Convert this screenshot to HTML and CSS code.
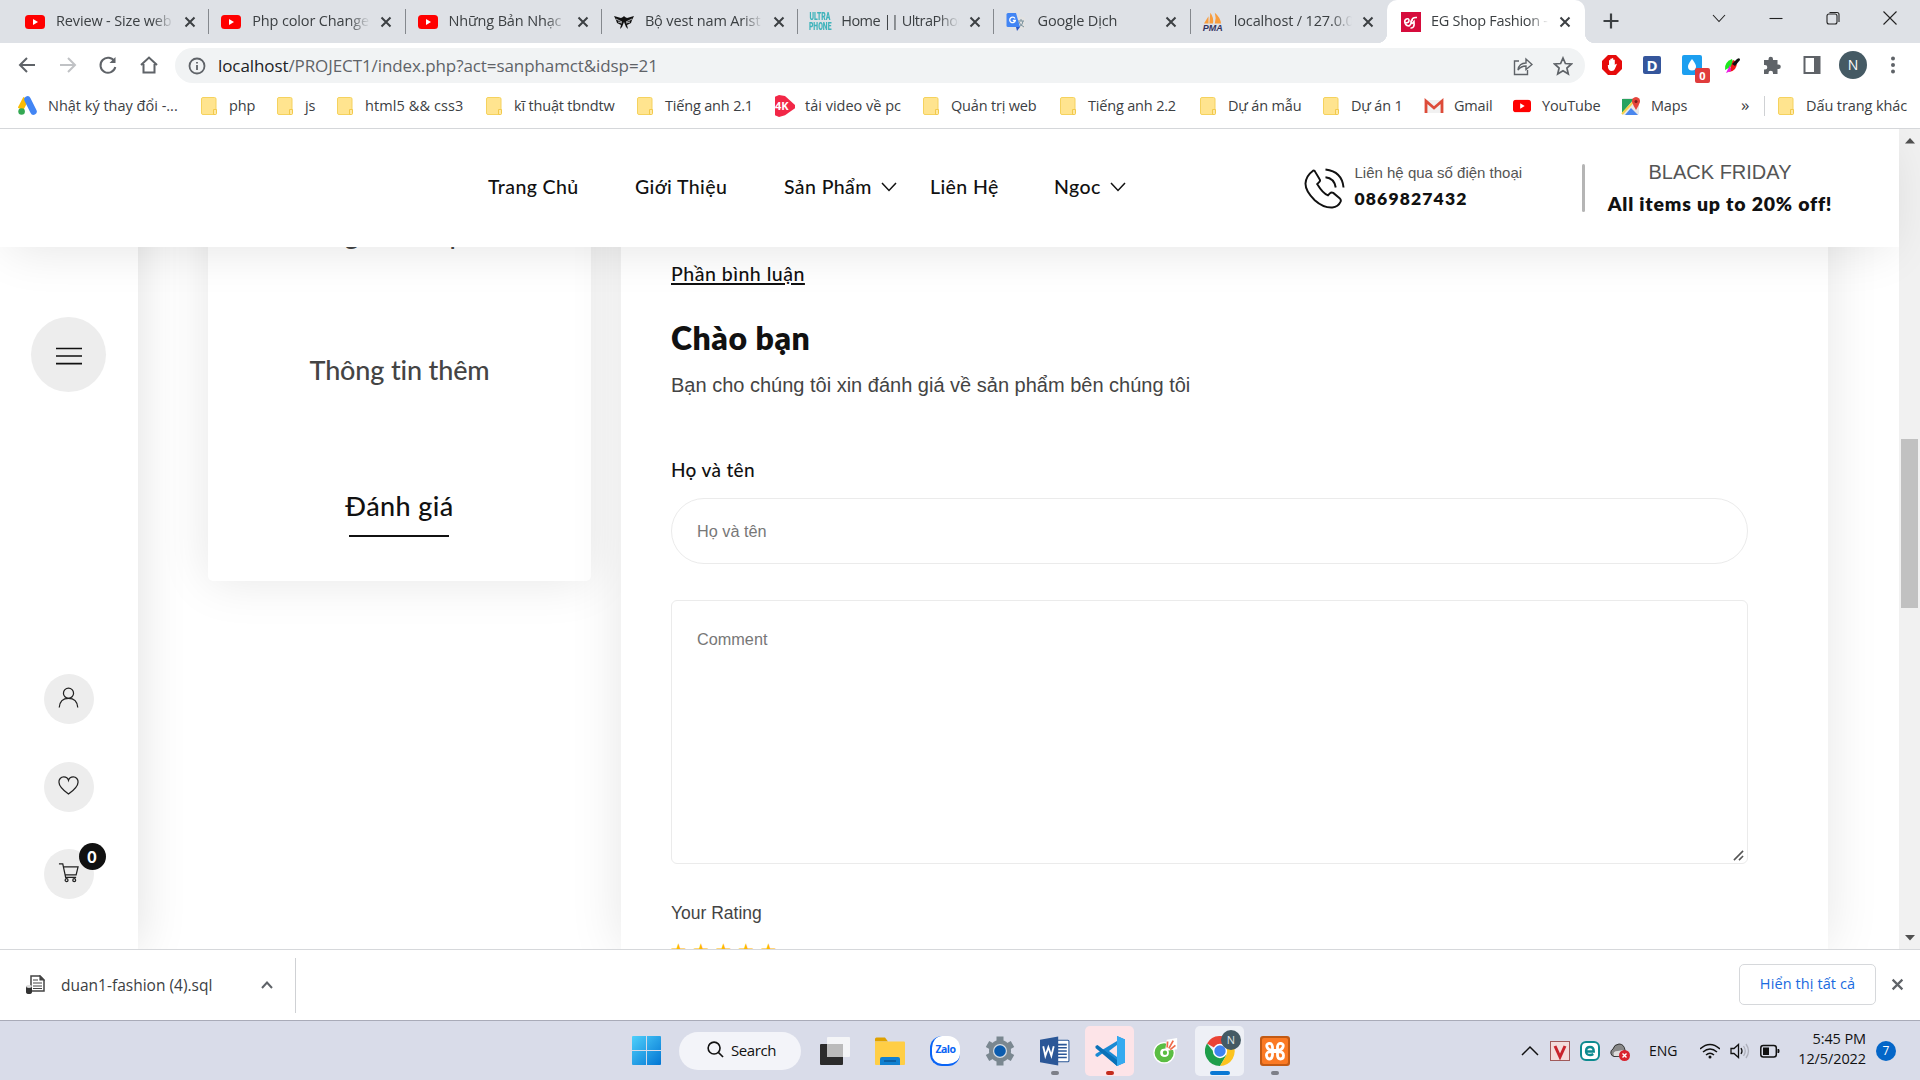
FILE: index.html
```html
<!DOCTYPE html>
<html lang="vi">
<head>
<meta charset="utf-8">
<title>EG Shop Fashion</title>
<link rel="stylesheet" href="styles.css">
</head>
<body>
<svg class="defs" width="0" height="0">
  <symbol id="x" viewBox="0 0 12 12"><path d="M1.5 1.5l9 9M10.5 1.5l-9 9" stroke="currentColor" stroke-width="2" fill="none"/></symbol>
  <symbol id="yt" viewBox="0 0 20 14"><rect width="20" height="14" rx="3.5" fill="#f00"/><path d="M8 4v6l5-3z" fill="#fff"/></symbol>
  <symbol id="folder" viewBox="0 0 16 18"><rect x=".5" y=".5" width="14.5" height="17" rx="1.5" fill="#ffe48f" stroke="#f5d25e"/><path d="M12.5 17.5v-5h3v4q0 1-1 1z" fill="#ffe9a3" stroke="#f2c94c"/></symbol>
  <symbol id="down" viewBox="0 0 16 10"><path d="M1 1l7 7.5L15 1" stroke="currentColor" stroke-width="1.5" fill="none"/></symbol>
</svg>

<div class="tabs">
  <div class="tab"><svg class="fav" viewBox="0 0 20 20"><use href="#yt" y="3" width="20" height="14"/></svg><span class="tt">Review - Size web</span><svg class="tx"><use href="#x"/></svg></div>
  <div class="tab"><svg class="fav" viewBox="0 0 20 20"><use href="#yt" y="3" width="20" height="14"/></svg><span class="tt">Php color Change</span><svg class="tx"><use href="#x"/></svg></div>
  <div class="tab"><svg class="fav" viewBox="0 0 20 20"><use href="#yt" y="3" width="20" height="14"/></svg><span class="tt">Những Bản Nhạc</span><svg class="tx"><use href="#x"/></svg></div>
  <div class="tab"><svg class="fav" viewBox="0 0 20 20"><path d="M0 4l7 2 2-1 1-1 1 1 2 1 7-2-2 4-1 3-4 2 1 4-2-2-2-5-2 5-2 2 1-4-4-2-1-3z" fill="#111"/><path d="M2 7l6 3M18 7l-6 3M4 10l4 1M16 10l-4 1" stroke="#dee1e6" stroke-width=".8"/></svg><span class="tt">Bộ vest nam Arist</span><svg class="tx"><use href="#x"/></svg></div>
  <div class="tab"><span class="fav ultra"><b>ULTRA</b><b>PHONE</b></span><span class="tt tight">Home || UltraPhon</span><svg class="tx"><use href="#x"/></svg></div>
  <div class="tab"><svg class="fav" viewBox="0 0 20 20"><rect x="8" y="5" width="11" height="12" rx="1" fill="#e2e2e2"/><path d="M12 9h6M15 7v2M13 15q4-2 4-6M13 10q1 3 5 5" stroke="#78909c" fill="none"/><path d="M2 1h8l4 14H2q-1.500 0-1.500-1.500v-11Q.5 1 2 1z" fill="#4285f4"/><path d="M10 15h4l-3 4z" fill="#2a56c6"/><path d="M9 6.500A2.800 2.800 0 1 0 9.300 8.500H6.800" stroke="#fff" stroke-width="1.300" fill="none"/></svg><span class="tt">Google Dịch</span><svg class="tx"><use href="#x"/></svg></div>
  <div class="tab"><span class="fav pma"><svg viewBox="0 0 20 13"><path d="M5 4v8H0zM7 0q4 5 3 12H6zM12 0q6 5 7 12h-7q2-6 0-12z" fill="#f89c3c"/></svg><b>PMA</b></span><span class="tt">localhost / 127.0.0</span><svg class="tx"><use href="#x"/></svg></div>
  <div class="tab active"><svg class="fav" viewBox="0 0 20 20"><rect width="20" height="20" fill="#d60c3c"/><path d="M4 11q4 0 4-2.500T5.500 7 4 11t4 3q2-1 2.500-5T16 5.500M12 8q-2.500 0-2 2.500t3-1q1 7-3.500 6.500" stroke="#fff" stroke-width="1.600" fill="none"/></svg><span class="tt">EG Shop Fashion -</span><svg class="tx"><use href="#x"/></svg></div>
  <svg class="plus" viewBox="0 0 16 16"><path d="M8 .5v15M.5 8h15" stroke="#3c4043" stroke-width="2.200"/></svg>
  <div class="wins">
    <svg viewBox="0 0 14 14"><path d="M1 4l6 6.500L13 4"/></svg>
    <svg viewBox="0 0 14 14"><path d="M.5 7.500h13"/></svg>
    <svg viewBox="0 0 14 14"><rect x="1" y="3" width="10" height="10" rx="2"/><path d="M3.500 1.500H11q2 0 2 2V11"/></svg>
    <svg viewBox="0 0 14 14"><path d="M.5 .5l13 13M13.500 .5l-13 13"/></svg>
  </div>
</div>

<div class="toolbar">
  <svg class="nav" viewBox="0 0 20 20"><path d="M18 10H3M10 3l-7 7 7 7"/></svg>
  <svg class="nav dim" viewBox="0 0 20 20"><path d="M2 10h15M10 3l7 7-7 7"/></svg>
  <svg class="nav" viewBox="0 0 20 20"><path d="M16.500 6.500A7.500 7.500 0 1 0 17.300 12"/><path d="M17.500 2v6h-6z" fill="#5f6368" stroke="none"/></svg>
  <svg class="nav" viewBox="0 0 20 20"><path d="M2 10l8-7.500L18 10M4.500 9v8.500h11V9"/></svg>
  <div class="omni">
    <svg class="info" viewBox="0 0 18 18"><circle cx="9" cy="9" r="7.500"/><path d="M9 8v5M9 5v1.600"/></svg>
    <span class="url"><b>localhost</b>/PROJECT1/index.php?act=sanphamct&amp;idsp=21</span>
    <svg class="oi" viewBox="0 0 20 20"><path d="M6 5H1.500v13.500h13V14M5 14q1-7 8-7V3l6 5.500-6 5V10q-5 0-8 4z" stroke-width="1.400"/></svg>
    <svg class="oi" viewBox="0 0 20 20"><path d="M10 2l2.400 5.500 6 .5-4.500 4 1.400 6L10 14.800 4.700 18l1.400-6-4.500-4 6-.5z" stroke-width="1.700"/></svg>
  </div>
  <div class="exts">
    <svg viewBox="0 0 20 20"><path d="M6 0h8l6 6v8l-6 6H6l-6-6V6z" fill="#e60b0b"/><path d="M6 10l1 0V5.500q.8-1 1.300 0V4q.9-1 1.500 0v-.5q.8-1 1.500 0V5q.8-1 1.500 0v5l1-1q1-.5 1 .3-1 2.700-2 4.700-.6 2-3 2-4 0-4-6z" fill="#fff"/></svg>
    <span class="ext-d">D</span>
    <span class="ext-w"><svg viewBox="0 0 20 20"><rect width="20" height="20" rx="2" fill="#1c9ff0"/><path d="M10 4q4 5 4 7.500a4 4 0 0 1-8 0Q6 9 10 4z" fill="#fff"/></svg><i>0</i></span>
    <svg viewBox="0 0 20 20"><path d="M3 15Q2 7 10 4l2 6z" fill="#1ee81e"/><path d="M7 17Q15 16 15 7l-4-2z" fill="#f01616"/><path d="M4 18l4-8 1 6z" fill="#ea1be5"/><path d="M10 9l5-5q3-2 3 1l-5 6z" fill="#111"/></svg>
    <svg viewBox="0 0 20 20"><path d="M2 5h4.500V4a2.200 2.200 0 0 1 4.500 0v1h4.500v4.500h1a2.300 2.300 0 0 1 0 4.600h-1V19H11v-1a2.200 2.200 0 0 0-4.500 0v1H2v-4.500h1a2.300 2.300 0 0 0 0-4.600H2z" fill="#5f6368"/></svg>
    <svg viewBox="0 0 20 20"><path d="M2.500 2h15v16h-15z" fill="none" stroke="#5f6368" stroke-width="2"/><path d="M12 2h6v16h-6z" fill="#5f6368"/></svg>
    <span class="ava">N</span>
    <svg viewBox="0 0 20 20" fill="#5f6368"><circle cx="9" cy="3.500" r="2"/><circle cx="9" cy="10" r="2"/><circle cx="9" cy="16.500" r="2"/></svg>
  </div>
</div>

<div class="marks">
  <div class="bm b1"><svg viewBox="0 0 20 20"><path d="M8 2.500L2.500 13" stroke="#fbbc04" stroke-width="6"/><path d="M9.500 3.500l6 12" stroke="#4285f4" stroke-width="6.500" stroke-linecap="round"/><circle cx="3.600" cy="15.500" r="3.300" fill="#34a853"/></svg><span>Nhật ký thay đổi -...</span></div>
  <div class="bm b2"><svg class="fo"><use href="#folder"/></svg><span>php</span></div>
  <div class="bm b3"><svg class="fo"><use href="#folder"/></svg><span>js</span></div>
  <div class="bm b4"><svg class="fo"><use href="#folder"/></svg><span>html5 &amp;&amp; css3</span></div>
  <div class="bm b5"><svg class="fo"><use href="#folder"/></svg><span>kĩ thuật tbndtw</span></div>
  <div class="bm b6"><svg class="fo"><use href="#folder"/></svg><span>Tiếng anh 2.1</span></div>
  <div class="bm b7"><span class="fourk">4K</span><span>tải video về pc</span></div>
  <div class="bm b8"><svg class="fo"><use href="#folder"/></svg><span>Quản trị web</span></div>
  <div class="bm b9"><svg class="fo"><use href="#folder"/></svg><span>Tiếng anh 2.2</span></div>
  <div class="bm b10"><svg class="fo"><use href="#folder"/></svg><span>Dự án mẫu</span></div>
  <div class="bm b11"><svg class="fo"><use href="#folder"/></svg><span>Dự án 1</span></div>
  <div class="bm b12"><svg viewBox="0 0 20 20"><path d="M1 4h18v13H1z" fill="#f1f1f1"/><path d="M2 17V5l8 7 8-7v12" stroke="#dd4b39" stroke-width="2.800" fill="none"/></svg><span>Gmail</span></div>
  <div class="bm b13"><svg viewBox="0 0 20 20"><use href="#yt" x="1" y="3.500" width="18" height="13"/></svg><span>YouTube</span></div>
  <div class="bm b14"><svg viewBox="0 0 20 20"><rect x="1" y="2" width="17" height="17" rx="2" fill="#e8e8e8"/><path d="M1 3h12L1 17z" fill="#27a35f"/><path d="M4 19l6-7 7 7z" fill="#4a87ee"/><path d="M1 18L14 4" stroke="#f7d147" stroke-width="2"/><path d="M15 1a4.300 4.300 0 0 1 4 5q-1 3-4 8-3-5-4-8a4.300 4.300 0 0 1 4-5z" fill="#e5443a"/><circle cx="15" cy="5.500" r="1.500" fill="#7d1d17"/></svg><span>Maps</span></div>
  <span class="more">»</span>
  <div class="bm b15"><svg class="fo"><use href="#folder"/></svg><span>Dấu trang khác</span></div>
</div>

<div class="page">
  <div class="side">
    <div class="circ big"><svg viewBox="0 0 26 18"><path d="M0 1.500h26M0 9h26M0 16.700h26" stroke="#111" stroke-width="1.700"/></svg></div>
    <div class="circ c2"><svg viewBox="0 0 22 22"><circle cx="11" cy="6.500" r="5.300"/><path d="M1.300 21.500Q2 12 11 12t9.700 9.500"/></svg></div>
    <div class="circ c3"><svg viewBox="0 0 22 22"><path d="M11 20Q1 12.500 1 7.500A5 5 0 0 1 6 2q4 0 5 3.500Q12 2 16 2a5 5 0 0 1 5 5.500Q21 12.500 11 20z"/></svg></div>
    <div class="circ c4"><svg viewBox="0 0 22 22"><path d="M1 2h4l3 14h11M5.500 5H21l-2 8.500H7.500"/><circle cx="9" cy="19" r="1.500"/><circle cx="17" cy="19" r="1.500"/></svg><i class="cnt">0</i></div>
  </div>
  <div class="left">
    <div class="lt">Thông tin sản phẩm</div>
    <div class="lt">Thông tin thêm</div>
    <div class="lt on">Đánh giá</div>
  </div>
  <div class="right">
    <div class="rev">Phần bình luận</div>
    <h2>Chào bạn</h2>
    <p class="ask">Bạn cho chúng tôi xin đánh giá về sản phẩm bên chúng tôi</p>
    <label>Họ và tên</label>
    <div class="inp">Họ và tên</div>
    <div class="area"><span>Comment</span><svg viewBox="0 0 12 12"><path d="M1 11L11 1M6.500 11L11 6.500" stroke="#555" stroke-width="1.700"/></svg></div>
    <div class="yr">Your Rating</div>
    <div class="stars"><span>★</span><span>★</span><span>★</span><span>★</span><span>★</span></div>
  </div>
  <div class="sb">
    <svg viewBox="0 0 10 6"><path d="M0 5.500L5 0l5 5.500z" fill="#505050"/></svg>
    <div class="thumb"></div>
    <svg class="dn" viewBox="0 0 10 6"><path d="M0 0h10L5 5.500z" fill="#505050"/></svg>
  </div>
  <header>
    <span class="n n1">Trang Chủ</span>
    <span class="n n2">Giới Thiệu</span>
    <span class="n n3">Sản Phẩm<svg><use href="#down"/></svg></span>
    <span class="n n4">Liên Hệ</span>
    <span class="n n5">Ngoc<svg><use href="#down"/></svg></span>
    <svg class="phone" viewBox="0 0 42 42"><path d="M9 3Q2 8 1.500 16q0 8 9.500 17 9 8 18 7.500 6-.5 8.500-6 .8-2-1-3.500L30 25.500q-2-1-3.500.5l-2 2q-5-1.500-11-11.500l2-2q1.500-1.500.5-3L11.500 4Q10.500 2 9 3z"/><path d="M22 1.500q17 2 18.500 18.500M22 9.500q9 1 10.500 10.500"/></svg>
    <div class="call"><span>Liên hệ qua số điện thoại</span><b>0869827432</b></div>
    <i class="vr"></i>
    <div class="bf"><span>BLACK FRIDAY</span><b>All items up to 20% off!</b></div>
  </header>
</div>

<div class="dl">
  <svg class="file" viewBox="0 0 20 20"><path d="M6 1h9l4 4v11H6z" fill="#fff" stroke="#444" stroke-width="1.500"/><path d="M15 1v4h4zM8 5h5M8 8h9M8 11h9M8 13.500h9" stroke="#444" stroke-width="1.200" fill="#444"/><path d="M1 11h6v6q0 2-3 2t-3-2z" fill="#333"/><ellipse cx="4" cy="11.500" rx="3" ry="1.400" fill="#ddd"/></svg>
  <span class="fn">duan1-fashion (4).sql</span>
  <svg class="up" viewBox="0 0 12 8"><path d="M1 7l5-5.500L11 7" stroke="#5f6368" stroke-width="2" fill="none"/></svg>
  <i class="sep"></i>
  <span class="all">Hiển thị tất cả</span>
  <svg class="cl"><use href="#x"/></svg>
</div>

<div class="task">
  <svg class="win" viewBox="0 0 30 30"><defs><linearGradient id="wg" x2="1" y2="1"><stop stop-color="#4fd0fb"/><stop offset="1" stop-color="#0275d3"/></linearGradient></defs><path d="M0 1q0-1 1-1h13.500v14.500H0zM15.500 0H29q1 0 1 1v13.500H15.500zM0 15.500h14.500V30H1q-1 0-1-1zM15.500 15.500H30V29q0 1-1 1H15.500z" fill="url(#wg)"/></svg>
  <div class="search"><svg viewBox="0 0 18 18"><circle cx="7.500" cy="7.500" r="6.300"/><path d="M12 12l5 5"/></svg>Search</div>
  <div class="apps">
    <div class="app"><svg viewBox="0 0 30 30"><rect y="8" width="23" height="21" rx="1" fill="#2b2b2b"/><rect x="7" y="1" width="23" height="20" rx="1" fill="#f4f5f7"/><path d="M7 8h16v13H7z" fill="#bbb"/></svg></div>
    <div class="app"><svg viewBox="0 0 30 30"><path d="M0 3q0-1.500 1.500-1.500H10l3 4H0z" fill="#dfa100"/><path d="M0 5.500h29q1 0 1 1V28q0 1-1 1H1q-1 0-1-1z" fill="#ffce45"/><path d="M5 29v-6q0-2 2-2h16q2 0 2 2v6z" fill="#1080d0"/><path d="M9 25h12" stroke="#0a5694" stroke-width="1.500"/></svg></div>
    <div class="app"><span class="zalo">Zalo</span></div>
    <div class="app"><svg viewBox="0 0 30 30"><circle cx="15" cy="15" r="11" fill="#7a8790"/><path d="M15 .5v29M2.500 8l25 14M27.500 8L2.500 22" stroke="#7a8790" stroke-width="7"/><circle cx="15" cy="15" r="7" fill="#d7dde4"/><circle cx="15" cy="15" r="5.800" fill="#0c5cae"/></svg></div>
    <div class="app gray"><svg viewBox="0 0 28 28"><path d="M14 4h12q1 0 1 1v18q0 1-1 1H14z" fill="#fff" stroke="#2b5797"/><path d="M16 8h9M16 11h9M16 14h9M16 17h9M16 20h9" stroke="#2b5797" stroke-width="1.500"/><path d="M0 3.500L17 .5v27l-17-3z" fill="#2b5797"/><path d="M3 9.500l2 9 2.800-8 2.800 8 2.200-9" stroke="#fff" stroke-width="1.700" fill="none"/></svg></div>
    <div class="app vs"><svg viewBox="0 0 30 30"><path d="M22 0l8 3.500v23L22 30 8 17l-5.500 4L.5 20v-2L22 5z" fill="#1a8ad4"/><path d="M.5 10l2-1L22 24v6L.5 12z" fill="#0a71b8"/><path d="M22 0l8 3.500v23L22 30z" fill="#35aaf0"/><path d="M22 9l-8 6 8 6z" fill="#fde4e8"/></svg></div>
    <div class="app"><svg viewBox="0 0 30 30"><circle cx="14" cy="17" r="12.500" fill="#fff"/><circle cx="14" cy="17" r="7.800" fill="none" stroke="#5abd43" stroke-width="6.500"/><path d="M15 15L17 2l12-2v13z" fill="#fff"/><path d="M17.500 11l.5-7M19.500 12l5-9M21 13.500l6-5" stroke="#ef6a4a" stroke-width="2"/><circle cx="15" cy="17" r="3.500" fill="#5abd43" stroke="#fff" stroke-width="2"/></svg></div>
    <div class="app chr"><svg viewBox="0 0 30 30"><path d="M15 15L2 7.500A15 15 0 0 1 28 7.500z" fill="#ea4335"/><path d="M15 15h-7L2 7.500A15 15 0 0 0 15 30l6.500-11z" fill="#1e9e4a"/><path d="M15 8h13a15 15 0 0 1-13 22l6.500-11z" fill="#fcc31e"/><circle cx="15" cy="15" r="7.200" fill="#fff"/><circle cx="15" cy="15" r="5.700" fill="#3f83f0"/></svg><i class="nb">N</i></div>
    <div class="app gray"><svg viewBox="0 0 30 30"><rect width="30" height="30" rx="3" fill="#c25a14"/><rect x="2" y="2" width="26" height="26" rx="2" fill="#fb7a24"/><path d="M9 7.500Q6 8 7 11t5 3.500h6q4-.5 5-3.500t-2-3.500-3.500 3V19q0 4 3 4t3-3.500-4.500-4h-8q-5 .5-4.500 4t3 3.500 3-4v-8q-.5-4-3.500-3.500z" stroke="#fff" stroke-width="2.800" fill="none"/></svg></div>
  </div>
  <div class="tray">
    <svg viewBox="0 0 20 20"><path d="M2 14l8-8 8 8" stroke="#111" stroke-width="1.500" fill="none"/></svg>
    <svg viewBox="0 0 20 20"><rect x=".5" y=".5" width="19" height="19" fill="#f3dcdc" stroke="#a05a5a"/><path d="M5 5l5 11 5-11" stroke="#c8232c" stroke-width="3" fill="none"/></svg>
    <svg viewBox="0 0 20 20"><rect x="1" y="1" width="18" height="18" rx="5" fill="#fff" stroke="#0d8a8f" stroke-width="2"/><path d="M6.500 10.500h7.300q0-4.500-3.800-4.500t-4 4 4 4q2 0 3.300-1" stroke="#0d8a8f" stroke-width="2.300" fill="none"/></svg>
    <svg viewBox="0 0 20 20"><path d="M4 15.500a4 4 0 0 1-1-7.500Q4 3.500 9 3q5 0 6 6v6z" fill="#888" stroke="#333"/><path d="M4 15q-2-5 4-5l5-1v6z" fill="#ddd"/><circle cx="14.500" cy="14.500" r="5.500" fill="#d9232e"/><path d="M12.500 12.500l4 4M16.500 12.500l-4 4" stroke="#fff" stroke-width="1.400"/></svg>
    <span class="eng">ENG</span>
    <svg viewBox="0 0 20 20" fill="none" stroke="#111" stroke-width="1.500"><path d="M0 8q10-9 20 0M3 11q7-6 14 0M6 14q4-3.500 8 0"/><circle cx="10" cy="16" r="1.500" fill="#111" stroke="none"/></svg>
    <svg viewBox="0 0 20 20" fill="none" stroke="#111" stroke-width="1.300"><path d="M1 7.500h3L8.500 3.500v13L4 12.500H1zM11 7q2 3 0 6"/><path d="M13.500 5q3.500 5 0 10M16 3q5 7 0 14" stroke="#aeb0bb"/></svg>
    <svg viewBox="0 0 20 20"><rect x=".8" y="4.500" width="15.500" height="11.500" rx="2.500" fill="none" stroke="#111" stroke-width="1.500"/><rect x="3" y="6.500" width="6" height="7.500" fill="#111"/><path d="M17.500 8h1.500q1 2 0 4h-1.500z" fill="#111"/></svg>
    <div class="clock"><span>5:45 PM</span><span>12/5/2022</span></div>
    <i class="seven">7</i>
  </div>
</div>
</body>
</html>
```
FILE: styles.css
```css
* { box-sizing: border-box; }
body { margin: 0; width: 1920px; height: 1080px; overflow: hidden; display: flex; flex-direction: column; background: #fff; font-family: "Open Sans", "Noto Sans", sans-serif; font-size: 14.5px; color: #3c4043; white-space: nowrap; }
svg { display: block; flex: none; }
i { font-style: normal; }
.defs { position: absolute; }

.tabs { height: 43px; background: #dee1e6; display: flex; padding-left: 13px; flex: none; }
.tab { width: 196.300px; height: 43px; display: flex; align-items: center; padding-left: 12px; position: relative; flex: none; }
.tab::after { content: ""; position: absolute; right: 0; top: 9px; width: 1px; height: 25px; background: #84888d; }
.tab:nth-child(7)::after, .tab.active::after { display: none; }
.fav { width: 20px; height: 20px; margin-right: 11px; flex: none; }
.tt { width: 118px; overflow: hidden; margin-right: 10px; padding-bottom: 2px; letter-spacing: -.15px; -webkit-mask-image: linear-gradient(90deg, #000 82%, transparent); mask-image: linear-gradient(90deg, #000 82%, transparent); }
.tight { letter-spacing: -.5px; }
.tx { width: 12px; height: 12px; }
.active { background: #fff; border-radius: 10px 10px 0 0; width: 198px; padding-left: 14px; }
.active .fav { margin-right: 10px; }
.active .tt { letter-spacing: -.3px; }
.active::before { content: ""; position: absolute; left: -10px; right: -10px; bottom: 0; height: 10px; background: radial-gradient(circle at 0 0, transparent 10px, #fff 10.500px) 0 0 / 10px 10px no-repeat, radial-gradient(circle at 10px 0, transparent 10px, #fff 10.500px) 100% 0 / 10px 10px no-repeat; }
.ultra, .pma { display: flex; flex-direction: column; align-items: center; justify-content: center; font: bold 9px/10px "Roboto", sans-serif; color: #3fb3bb; }
.ultra b { transform: scaleX(.62); font-size: 11px; font-weight: 900; }
.pma b { font: italic bold 9px/7px "Liberation Sans", sans-serif; color: #33335f; }
.pma svg { width: 18px; height: 13px; }
.plus { width: 16px; height: 16px; margin: 13px 0 0 18px; }
.wins { display: flex; gap: 43px; margin: 11px 0 0 93px; }
.wins svg { width: 14px; height: 14px; fill: none; stroke: #222; stroke-width: 1.100; }

.toolbar { height: 45px; display: flex; align-items: center; padding-left: 17px; padding-bottom: 1px; flex: none; }
.nav { width: 20px; height: 20px; margin-right: 20.500px; fill: none; stroke: #5f6368; stroke-width: 2; }
.nav.dim { stroke: #c0c2c5; }
.nav:nth-child(4) { margin-right: 16.500px; }
.omni { width: 1410px; height: 35px; margin-top: 1px; border-radius: 18px; background: #f1f3f4; display: flex; align-items: center; padding-left: 13px; flex: none; }
.info { width: 18px; height: 18px; fill: none; stroke: #5f6368; stroke-width: 1.800; margin-right: 12px; }
.url { font-size: 17px; letter-spacing: -.09px; color: #5f6368; width: 1295px; flex: none; padding-bottom: 1px; }
.url b { font-weight: 400; color: #202124; }
.oi { width: 20px; height: 20px; margin-right: 20px; fill: none; stroke: #5f6368; }
.exts { display: flex; align-items: center; gap: 20px; margin-left: 17px; }
.exts > svg { width: 20px; height: 20px; }
.ext-d { width: 18px; height: 18px; margin: 0 1px; background: #35569c; border-radius: 2px; color: #fff; font: bold 15px/18px "Open Sans", sans-serif; text-align: center; }
.ext-w { position: relative; }
.ext-w svg { width: 20px; height: 20px; }
.ext-w i { position: absolute; left: 13px; top: 13px; width: 15px; height: 15px; border-radius: 2px; background: #e03c3c; color: #fff; font: bold 11px/15px "Open Sans", sans-serif; text-align: center; }
.ava { width: 28px; height: 28px; margin: 0 -3px; border-radius: 50%; background: #455a64; color: #fff; font-size: 14px; line-height: 28px; text-align: center; }

.marks { height: 41px; flex: none; border-bottom: 1px solid #d5d7da; display: flex; align-items: center; padding-left: 18px; padding-bottom: 4px; }
.bm { display: flex; align-items: center; gap: 10px; letter-spacing: -.18px; flex: none; }
.bm > span:last-child { padding-bottom: 2px; }
.bm > svg { width: 20px; height: 20px; }
.bm > .fo { width: 16px; height: 18px; margin-right: 2px; }
.b1 { width: 183px; letter-spacing: 0; } .b2 { width: 76px; } .b3 { width: 60px; } .b4 { width: 149px; letter-spacing: .1px; } .b5 { width: 151px; } .b6 { width: 138px; } .b7 { width: 148px; letter-spacing: 0; } .b8 { width: 137px; } .b9 { width: 140px; } .b10 { width: 123px; } .b11 { width: 101px; } .b12 { width: 88px; } .b13 { width: 109px; } .b14 { width: 120px; }
.fourk { width: 20px; height: 22px; background: #f22747; clip-path: polygon(0 8%, 20% 0, 50% 5%, 100% 45%, 100% 60%, 50% 92%, 20% 100%, 0 92%); color: #fff; font: bold 11px/22px "Open Sans", sans-serif; }
.more { width: 23px; font-size: 17px; padding-bottom: 3px; }
.b15 { border-left: 1px solid #cfd1d4; height: 20px; padding-left: 13px; letter-spacing: -.1px; }

.page { height: 820px; position: relative; overflow: hidden; display: flex; flex: none; font-family: "Liberation Sans", Arial, sans-serif; }
.side { width: 138px; padding-right: 1px; background: #fff; box-shadow: 0 0 50px rgba(0,0,0,.13); clip-path: inset(0 -60px 0 0); display: flex; flex-direction: column; align-items: center; flex: none; }
.circ { width: 50px; height: 50px; border-radius: 50%; background: #ededed; display: flex; align-items: center; justify-content: center; position: relative; }
.circ svg { width: 21px; height: 21px; margin-bottom: 4px; fill: none; stroke: #222; stroke-width: 1.300; }
.circ.big { width: 75px; height: 75px; margin-top: 188px; }
.circ.big svg { width: 26px; height: 18px; margin: 2px 0 0; }
.c2 { margin-top: 282px; } .c3 { margin-top: 38px; } .c4 { margin-top: 37px; }
.cnt { position: absolute; left: 35px; top: -6px; width: 27px; height: 27px; border-radius: 50%; background: #111; color: #fff; font: 900 16px/27px "Lato", sans-serif; text-align: center; }
.left { width: 383px; height: 452px; margin-left: 70px; border-radius: 5px; background: #fff; box-shadow: 0 0 50px rgba(0,0,0,.1); flex: none; display: flex; flex-direction: column; align-items: center; padding-top: 85px; }
.lt { font: 500 27px/40px "Lato", sans-serif; font-variant-ligatures: none; letter-spacing: -.15px; color: #444; margin-bottom: 96px; }
.lt.on { color: #111; margin: 0; letter-spacing: .4px; display: flex; flex-direction: column; align-items: center; }
.lt.on::after { content: ""; width: 100px; height: 2px; background: #111; margin-top: 9px; }
.right { width: 1207px; margin-left: 30px; background: #fff; box-shadow: 0 0 50px rgba(0,0,0,.1); padding: 130px 0 0 50px; flex: none; }
.rev { font: 500 19.500px/30px "Lato", sans-serif; letter-spacing: .5px; color: #111; text-decoration: underline; text-decoration-thickness: 2px; text-underline-offset: 2px; }
h2 { font: 800 32px/44px "Lato", sans-serif; letter-spacing: .55px; color: #111; margin: 27px 0 0; }
.ask { font-size: 20px; line-height: 30px; color: #444; margin: 10px 0 0; }
label { display: block; font: 500 19px/26px "Lato", sans-serif; letter-spacing: .35px; color: #111; margin-top: 57px; }
.inp { width: 1077px; height: 66px; margin-top: 15px; border: 1px solid #ebebeb; border-radius: 33px; padding-left: 25px; font-size: 16.250px; line-height: 65px; color: #777; }
.area { width: 1077px; height: 264px; margin-top: 36px; border: 1px solid #ebebeb; border-radius: 6px; padding: 28px 3px 2px 25px; font-size: 16.250px; line-height: 20px; color: #777; display: flex; justify-content: space-between; }
.area svg { width: 11px; height: 11px; align-self: flex-end; }
.yr { font-size: 17.500px; line-height: 24px; color: #444; margin-top: 37px; }
.stars { display: flex; font: 19px/20px "DejaVu Sans", sans-serif; color: #ffb800; margin: 15px 0 0 -1px; }
.stars span { width: 22.500px; }
.sb { width: 21px; margin-left: 71px; background: #f1f1f1; display: flex; flex-direction: column; align-items: center; padding-top: 9px; flex: none; }
.sb svg { width: 10px; height: 6px; }
.thumb { width: 17px; height: 169px; background: #c1c1c1; margin-top: 295px; }
.sb .dn { margin-top: 327px; }
header { position: absolute; left: 0; top: 0; width: 1899px; height: 118px; background: #fff; box-shadow: 0 10px 50px -8px rgba(0,0,0,.11); display: flex; align-items: center; padding-left: 488px; }
.n { font: 500 19.500px/30px "Lato", sans-serif; letter-spacing: .4px; color: #111; display: flex; align-items: center; padding-bottom: 2px; flex: none; }
.n svg { width: 16px; height: 10px; margin-left: 9px; }
.n1 { width: 147px; } .n2 { width: 149px; } .n3 { width: 146px; } .n4 { width: 124px; } .n5 { width: 250px; }
.phone { width: 41px; height: 41px; fill: none; stroke: #111; stroke-width: 2; }
.call { width: 237px; padding: 0 0 2px 9.500px; display: flex; flex-direction: column; flex: none; }
.call span { font-size: 15px; line-height: 24px; color: #555; }
.call b { font: 800 17.500px/28px "Lato", sans-serif; letter-spacing: 1.150px; color: #111; }
.vr { width: 3px; height: 48px; background: #b5b5b5; border-radius: 2px; flex: none; }
.bf { width: 270px; display: flex; flex-direction: column; align-items: center; flex: none; }
.bf span { font-size: 20px; line-height: 31px; color: #555; }
.bf b { font: 800 19.500px/32px "Lato", sans-serif; letter-spacing: .78px; color: #111; }

.dl { height: 71px; flex: none; border-top: 1px solid #d6d8db; display: flex; align-items: center; padding-left: 25px; }
.file { width: 20px; height: 20px; margin-right: 16px; }
.fn { font-size: 15.500px; width: 200px; letter-spacing: 0; }
.up { width: 12px; height: 8px; margin-right: 22px; }
.sep { width: 1px; height: 55px; background: #cfd1d4; }
.all { width: 137px; height: 41px; margin: -2px 0 0 1443px; border: 1px solid #d6d8db; border-radius: 5px; color: #1a6be0; line-height: 38px; text-align: center; font-weight: 500; letter-spacing: .1px; }
.cl { width: 13px; height: 13px; margin: -2px 0 0 15px; color: #5f6368; }

.task { height: 60px; flex: none; border-top: 1px solid #a9abb8; background: #d9dce9; display: flex; align-items: center; padding-left: 632px; color: #111; }
.win { width: 29px; height: 29px; }
.search { width: 122px; height: 38px; margin-left: 18px; border-radius: 19px; background: #f3f4f9; display: flex; align-items: center; padding: 0 0 2px 28px; gap: 7px; font-size: 15px; letter-spacing: -.4px; }
.search svg { width: 17px; height: 17px; fill: none; stroke: #111; stroke-width: 1.700; }
.apps { display: flex; margin-left: 6px; }
.app { width: 55px; height: 50px; display: flex; align-items: center; justify-content: center; position: relative; }
.app svg { width: 30px; height: 30px; }
.app.vs, .app.chr { width: 49px; margin: 0 3px; border-radius: 5px; background: #fde4e8; }
.app.chr { background: #eef0f6; }
.app:nth-child(7) svg { width: 26px; height: 26px; }
.gray::after, .vs::after, .chr::after { content: ""; position: absolute; bottom: 1px; width: 8px; height: 4px; border-radius: 2px; background: #7d7f88; }
.vs::after { background: #c42b1c; }
.chr::after { width: 20px; background: #0b78d4; }
.nb { position: absolute; left: 26px; top: 4px; width: 20px; height: 20px; border-radius: 50%; background: #455a64; color: #dfe4e6; font-size: 11px; line-height: 20px; text-align: center; }
.zalo { width: 30px; height: 30px; border-radius: 12px; background: #fff; border-left: 2px solid #0a64f5; border-bottom: 2px solid #0a64f5; color: #0a64f5; font: bold 10.500px/27px "Open Sans", sans-serif; letter-spacing: -.5px; text-align: center; }
.tray { display: flex; align-items: center; margin-left: 218px; gap: 10px; }
.tray svg { width: 20px; height: 20px; }
.eng { width: 48px; padding-left: 9px; margin-right: 2px; font-size: 14px; }
.clock { display: flex; flex-direction: column; text-align: right; width: 76px; line-height: 20px; padding-bottom: 3px; font-size: 14.500px; letter-spacing: -.1px; }
.seven { width: 20px; height: 20px; border-radius: 50%; background: #0466c8; color: #fff; font-size: 12px; line-height: 20px; text-align: center; }
```
